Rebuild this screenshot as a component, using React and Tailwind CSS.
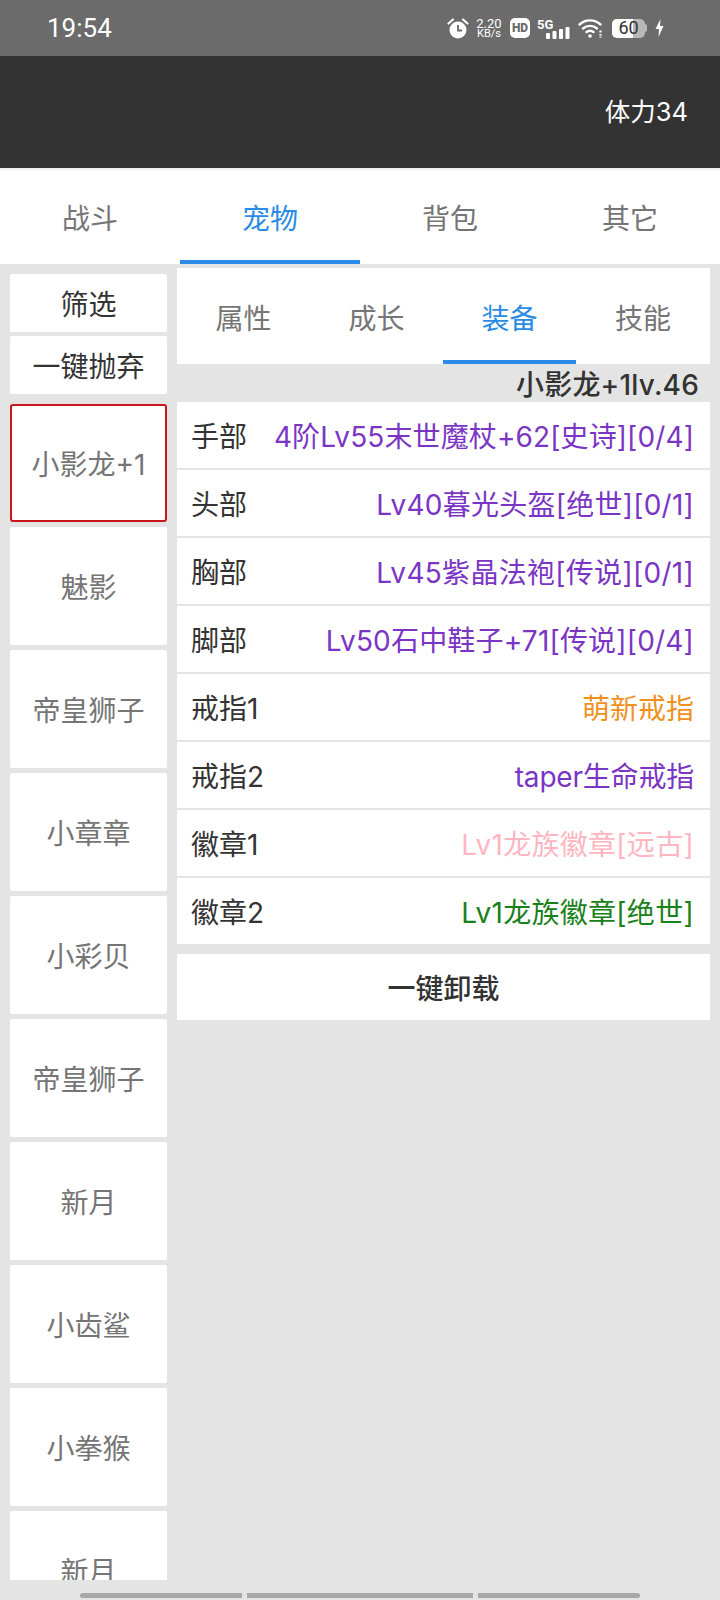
import React from "react";

const pets = ["魅影", "帝皇狮子", "小章章", "小彩贝", "帝皇狮子", "新月", "小齿鲨", "小拳猴", "新月"];
const purple = "text-[#7b35c4] tracking-[0.2px]";
const rows = [
  ["手部", "4阶Lv55末世魔杖+62[史诗][0/4]", "text-[#7b35c4] tracking-[0.12px]"],
  ["头部", "Lv40暮光头盔[绝世][0/1]", "text-[#7b35c4] tracking-[0.25px]"],
  ["胸部", "Lv45紫晶法袍[传说][0/1]", "text-[#7b35c4] tracking-[0.3px]"],
  ["脚部", "Lv50石中鞋子+71[传说][0/4]", purple],
  ["戒指1", "萌新戒指", "text-[#f0901e]"],
  ["戒指2", "taper生命戒指", "text-[#7b35c4] tracking-[-0.2px]"],
  ["徽章1", "Lv1龙族徽章[远古]", "text-[#ffb6c1] tracking-[0.3px]"],
  ["徽章2", "Lv1龙族徽章[绝世]", "text-[#1a801a] tracking-[0.3px]"],
];

function Tab({ label, active, sub, last }) {
  return (
    <div className={`${sub && !last ? "w-[133px]" : "flex-1"} flex items-center justify-center border-b-4 ${active ? "border-[#2b8be6] text-[#2b8be6]" : "border-transparent text-[#757575]"}`}>
      <span className="relative top-[5px]">{label}</span>
    </div>
  );
}

function StatusIcons() {
  return (
    <div className="flex items-center text-white">
      <svg width="22" height="21" viewBox="0 0 22 21" className="mr-[7px]">
        <circle cx="11" cy="12" r="8.500" fill="#fff" />
        <path d="M11 7V12.500H15" fill="none" stroke="#6b6b6b" strokeWidth="1.800" />
        <path d="M1.500 5.500 L6 1.500 M20.500 5.500 L16 1.500" stroke="#fff" strokeWidth="2.200" strokeLinecap="round" />
      </svg>
      <div className="w-[26px] mr-[8px] flex flex-col items-center leading-[10px] font-['Roboto',sans-serif]">
        <span className="text-[13px] leading-[11px]">2.20</span>
        <span className="text-[11px] leading-[10px]">KB/s</span>
      </div>
      <div className="w-[20px] h-[20px] rounded-[5px] bg-white mr-[7px] flex items-center justify-center text-[#6b6b6b] text-[12px] font-black leading-none font-['Roboto',sans-serif]">HD</div>
      <svg width="33" height="21" viewBox="0 0 33 21" className="mr-[8px]">
        <text x="0" y="11" fontSize="13" fontWeight="700" fill="#fff" fontFamily="Roboto">5G</text>
        <rect x="9" y="15" width="4" height="6" rx="1" fill="#fff" />
        <rect x="15.500" y="13" width="4" height="8" rx="1" fill="#fff" />
        <rect x="22" y="11" width="4" height="10" rx="1" fill="#fff" />
        <rect x="28.500" y="9" width="4" height="12" rx="1" fill="#fff" />
      </svg>
      <svg width="25" height="20" viewBox="0 0 25 20" className="mr-[9px]">
        <path d="M1.500 6.500C7.500 1 16.500 1 22.500 6.500M5 10.500C9 7 15 7 19 10.500M8.500 14C10.500 12.500 13.500 12.500 15.500 14" fill="none" stroke="#fff" strokeWidth="2.400" strokeLinecap="round" />
        <circle cx="12" cy="18" r="1.800" fill="#fff" />
        <path d="M22.500 12.500v2M22.500 16v1.500M22.500 18.500v1" stroke="#fff" strokeWidth="2.200" />
      </svg>
      <div className="flex items-center mr-[8px]">
        <div className="relative w-[33px] h-[19px] rounded-[5px] overflow-hidden bg-[#b8b8b8] flex items-center justify-center">
          <div className="absolute left-0 top-0 bottom-0 w-[21px] bg-white"></div>
          <span className="relative text-[#333] text-[18px] leading-none font-['Roboto',sans-serif]">60</span>
        </div>
        <div className="w-[2px] h-[8px] rounded-r-[2px] bg-[#b8b8b8]"></div>
      </div>
      <svg width="9" height="18" viewBox="0 0 9 18">
        <path d="M5.500 0 L0.500 10 H4 L3.500 18 L8.500 7 H5 Z" fill="#fff" />
      </svg>
    </div>
  );
}

export default function App() {
  return (
    <div className="w-[720px] h-[1600px] overflow-hidden flex flex-col bg-[#e4e4e4] text-[28px] font-['Inter','Noto_Sans_CJK_SC',sans-serif]">
      <div className="h-14 shrink-0 bg-[#6b6b6b] flex items-center justify-between pl-[47px] pr-[56px]">
        <span className="text-white text-[26px] font-['Roboto',sans-serif]">19:54</span>
        <StatusIcons />
      </div>
      <div className="h-28 shrink-0 bg-[#333333] flex items-center justify-end pr-[32px] text-white text-[25.5px]">
        体力34
      </div>
      <div className="h-24 shrink-0 bg-white flex shadow-[inset_0_4px_4px_-3px_rgba(0,0,0,0.12)]">
        <Tab label="战斗" />
        <Tab label="宠物" active />
        <Tab label="背包" />
        <Tab label="其它" />
      </div>
      <div className="h-[1316px] shrink-0 flex pl-[10px] pr-[10px]">
        <div className="w-[157px] shrink-0 mr-[10px] pt-[10px] flex flex-col overflow-hidden">
          <div className="h-[58px] shrink-0 pt-[4px] bg-white flex items-center justify-center text-[#333] rounded-[2px]">筛选</div>
          <div className="h-[58px] shrink-0 pt-[4px] mt-[4px] bg-white flex items-center justify-center text-[#333] rounded-[2px]">一键抛弃</div>
          <div className="h-[118px] shrink-0 pt-[4px] mt-[10px] bg-white flex items-center justify-center text-[#757575] rounded-[3px] border-2 border-[#c8161d]">小影龙+1</div>
          {pets.map((p, i) => (
            <div key={i} className="h-[118px] shrink-0 pt-[4px] mt-[5px] bg-white flex items-center justify-center text-[#757575] rounded-[2px]">{p}</div>
          ))}
        </div>
        <div className="flex-1 pt-[4px] flex flex-col">
          <div className="h-24 shrink-0 bg-white flex">
            <Tab label="属性" sub />
            <Tab label="成长" sub />
            <Tab label="装备" sub active />
            <Tab label="技能" sub last />
          </div>
          <div className="h-[38px] shrink-0 pt-[4px] flex items-center justify-end pr-[11px] text-[#333] leading-none font-medium tracking-[0.2px]">小影龙+1lv.46</div>
          <div className="flex flex-col gap-[2px]">
            {rows.map(([k, v, c]) => (
              <div key={k} className="h-[66px] pt-[4px] bg-white flex items-center justify-between pl-[14px] pr-[16px]">
                <span className="text-[#333] whitespace-nowrap">{k}</span>
                <span className={`${c} whitespace-nowrap`}>{v}</span>
              </div>
            ))}
          </div>
          <div className="h-[66px] pt-[4px] mt-[10px] bg-white flex items-center justify-center text-[#333] font-medium">一键卸载</div>
        </div>
      </div>
      <div className="flex-1 flex items-start pt-[13px] pl-[80px] gap-[5px]">
        <div className="w-[162px] h-[5px] rounded-l-full bg-[#a8a8a8]"></div>
        <div className="w-[226px] h-[5px] bg-[#a8a8a8]"></div>
        <div className="w-[162px] h-[5px] rounded-r-full bg-[#a8a8a8]"></div>
      </div>
    </div>
  );
}
